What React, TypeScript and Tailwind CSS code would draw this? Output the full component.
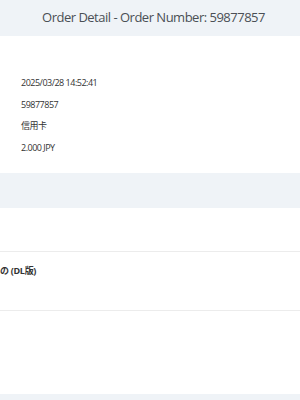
import React from 'react';

const rows = ['2025/03/28 14:52:41', '59877857', '信用卡', '2.000 JPY'];

const App: React.FC = () => {
  return (
    <div
      className="w-[300px] h-[400px] overflow-hidden bg-white text-[#333]"
      style={{ fontFamily: '"Open Sans", "Noto Sans CJK JP", sans-serif' }}
    >
      {/* Header */}
      <div className="h-[36px] bg-[#eff3f7] flex items-center justify-center pl-[7px] pb-[1px]">
        <h1 className="text-[13px] text-[#4a4f55] tracking-[-0.5px]">
          Order Detail - Order Number: 59877857
        </h1>
      </div>

      {/* Order info */}
      <div className="pt-[40px] pl-[21px] flex flex-col gap-[8.7px] h-[137px]">
        {rows.map((r) => (
          <p key={r} className="text-[9px] leading-[13px] tracking-[-0.5px] text-[#333]">
            {r}
          </p>
        ))}
      </div>

      {/* Section bar */}
      <div className="h-[35px] bg-[#eff3f7]" />

      {/* Items */}
      <div className="h-[43px]" />
      <div className="border-t border-[#ececec] h-[59px] pt-[12px]">
        <p className="text-[9px] font-bold leading-[13px] tracking-[-0.3px] text-[#333]">の (DL版)</p>
      </div>
      <div className="border-t border-[#ececec] h-[84px]" />
      <div className="h-[6px] bg-[#eff3f7]" />
    </div>
  );
};

export default App;
